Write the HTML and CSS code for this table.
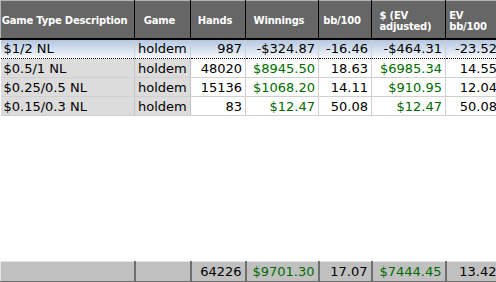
FILE: index.html
```html
<!DOCTYPE html>
<html>
<head>
<meta charset="utf-8">
<link rel="stylesheet" href="styles.css">
</head>
<body>
<div class="grid">
  <table class="data">
    <colgroup>
      <col class="c1"><col class="c2"><col class="c3"><col class="c4"><col class="c5"><col class="c6"><col class="c7">
    </colgroup>
    <thead>
      <tr>
        <th><span class="lbl">Game Type Description</span></th>
        <th><span class="lbl">Game</span></th>
        <th><span class="lbl">Hands</span></th>
        <th><span class="lbl">Winnings</span></th>
        <th><span class="lbl">bb/100</span></th>
        <th><span class="lbl">$ (EV<br>adjusted)</span></th>
        <th class="last"><span class="lbl">EV<br>bb/100</span></th>
      </tr>
    </thead>
    <tbody>
      <tr class="sel">
        <td class="txt">$1/2 NL</td><td class="txt">holdem</td><td class="num">987</td><td class="num">-$324.87</td><td class="num">-16.46</td><td class="num">-$464.31</td><td class="num">-23.52</td>
      </tr>
      <tr>
        <td class="txt">$0.5/1 NL</td><td class="txt">holdem</td><td class="num">48020</td><td class="num pos">$8945.50</td><td class="num">18.63</td><td class="num pos">$6985.34</td><td class="num">14.55</td>
      </tr>
      <tr>
        <td class="txt">$0.25/0.5 NL</td><td class="txt">holdem</td><td class="num">15136</td><td class="num pos">$1068.20</td><td class="num">14.11</td><td class="num pos">$910.95</td><td class="num">12.04</td>
      </tr>
      <tr>
        <td class="txt">$0.15/0.3 NL</td><td class="txt">holdem</td><td class="num">83</td><td class="num pos">$12.47</td><td class="num">50.08</td><td class="num pos">$12.47</td><td class="num">50.08</td>
      </tr>
    </tbody>
  </table>
  <div class="spacer"></div>
  <table class="foot">
    <colgroup>
      <col class="c1"><col class="c2"><col class="c3"><col class="c4"><col class="c5"><col class="c6"><col class="c7">
    </colgroup>
    <tr>
      <td></td><td></td><td class="num">64226</td><td class="num pos">$9701.30</td><td class="num">17.07</td><td class="num pos">$7444.45</td><td class="num">13.42</td>
    </tr>
  </table>
</div>
</body>
</html>
```
FILE: styles.css
```css
html, body {
  margin: 0;
  padding: 0;
  background: #fff;
}
.grid {
  width: 496px;
  height: 282px;
  display: flex;
  flex-direction: column;
  overflow: hidden;
  font-family: "DejaVu Sans", Verdana, sans-serif;
}
table {
  border-collapse: collapse;
  table-layout: fixed;
  width: 500px;
}
.c1 { width: 134px; }
.c2 { width: 56px; }
.c3 { width: 55px; }
.c4 { width: 73px; }
.c5 { width: 53px; }
.c6 { width: 74px; }
.c7 { width: 55px; }

thead th {
  height: 38px;
  padding: 3px 6px 0 0;
  background: #666;
  color: #fff;
  font-size: 10px;
  font-weight: bold;
  text-align: center;
  line-height: 11px;
  white-space: nowrap;
  border-top: 1px solid #b4b4b4;
  border-left: 1px solid #b4b4b4;
  border-right: 1px solid #000;
  border-bottom: 2px solid #000;
  box-sizing: border-box;
}
thead th.last { padding-right: 10px; }
.lbl {
  display: inline-block;
  text-align: left;
  letter-spacing: -0.2px;
}

tbody tr { height: 19px; }
tbody tr.sel { height: 20px; }

tbody td {
  padding: 0 3px;
  font-size: 13px;
  line-height: 15px;
  color: #000;
  border-right: 1px solid #d0d0d0;
  border-bottom: 1px solid #d0d0d0;
  white-space: nowrap;
  overflow: hidden;
}
tbody td.txt {
  background: #dcdcdc;
  border-right: 1px solid #c4c4c4;
}
.num { text-align: right; }
.pos { color: #006b00; }

tbody tr.sel td {
  background: linear-gradient(#b4c7e0, #f6f8fb);
  border-top: 1px dotted #000;
  border-bottom: 1px dotted #000;
  border-right-color: #c8d2de;
  color: #000;
}

.spacer { flex: 1; }

.foot td {
  height: 20px;
  padding: 0 3px;
  font-size: 13px;
  background: #c0c0c0;
  border-top: 1px solid #e4e4e4;
  border-left: 1px solid #e4e4e4;
  border-right: 2px solid #6e6e6e;
  border-bottom: 1px solid #6e6e6e;
  box-sizing: border-box;
}
```
